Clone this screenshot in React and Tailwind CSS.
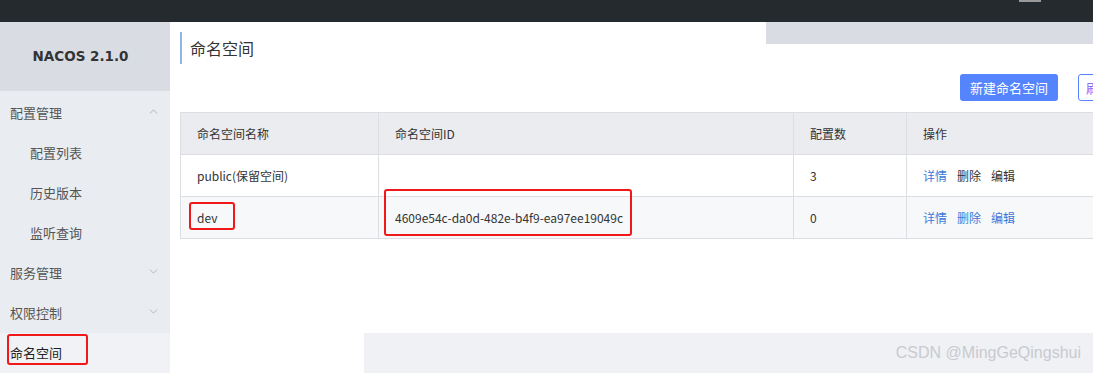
import React from "react";
import { ChevronUp, ChevronDown } from "lucide-react";

const font = { fontFamily: '"Noto Sans CJK SC", "Liberation Sans", sans-serif' };

function RedBox({ className }) {
  return <div className={"absolute border-2 border-[#f01818] rounded-[3px] pointer-events-none " + className} />;
}

function MenuItem({ label, sub, chevron, active, children }) {
  return (
    <div className={"relative h-10 flex items-center justify-between pr-[10px] text-[13px] " + (sub ? "pl-[30px] " : "pl-[10px] ") + (active ? "bg-[#f1f2f6] text-[#222]" : "text-[#555]")}>
      <span>{label}</span>
      {chevron === "up" && <ChevronUp size={13} strokeWidth={1.2} className="text-[#999] -mt-1" />}
      {chevron === "down" && <ChevronDown size={13} strokeWidth={1.2} className="text-[#999] -mt-1" />}
      {children}
    </div>
  );
}

function App() {
  return (
    <div className="w-[1093px] h-[373px] flex flex-col overflow-hidden bg-white" style={font}>

      {/* ===== TOP BAR ===== */}
      <div className="h-[22px] bg-[#252a2f] flex justify-end pr-[52px] shrink-0">
        <div className="w-[22px] h-[2px] bg-[#9a9a9a]" />
      </div>

      <div className="flex flex-1 min-h-0">

        {/* ===== SIDEBAR ===== */}
        <div className="w-[170px] shrink-0 bg-[#e9ecf0] flex flex-col">
          <div className="h-[70px] bg-[#d9dde3] flex items-center justify-center pr-[9px]">
            <span className="text-[13.5px] font-bold text-[#333]" style={{ fontFamily: '"DejaVu Sans", sans-serif' }}>NACOS 2.1.0</span>
          </div>
          <div className="pt-[2px] flex flex-col">
            <MenuItem label="配置管理" chevron="up" />
            <MenuItem label="配置列表" sub />
            <MenuItem label="历史版本" sub />
            <MenuItem label="监听查询" sub />
            <MenuItem label="服务管理" chevron="down" />
            <MenuItem label="权限控制" chevron="down" />
            <MenuItem label="命名空间" active>
              <RedBox className="left-[7px] top-[1px] w-[81px] h-[31px]" />
            </MenuItem>
          </div>
        </div>

        {/* ===== MAIN ===== */}
        <div className="relative flex-1 flex flex-col overflow-hidden">
          <div className="absolute right-0 top-0 w-[327px] h-[22px] bg-[#d9dde3]" />

          {/* Title */}
          <div className="mt-[10px] ml-[10px] h-[32px] border-l-2 border-[#8fb7df] flex items-center pl-[8px]">
            <span className="text-[16px] text-[#333]">命名空间</span>
          </div>

          {/* Actions */}
          <div className="mt-[10px] h-[27px] flex justify-end gap-5 -mr-[65px]">
            <button className="w-[98px] h-[27px] rounded-[3px] bg-[#5584ff] text-white text-[13px]">新建命名空间</button>
            <button className="w-[80px] h-[27px] rounded-[3px] border border-[#5584ff] bg-white text-[#8a6cff] text-[13px] flex items-center pl-[7px]">刷新</button>
          </div>

          {/* Table */}
          <div className="mt-[11px] ml-[10px] w-[1000px] border-l border-t border-[#dcdee3] text-[12px] text-[#333]">
            <div className="flex h-[42px] bg-[#ebecf0] border-b border-[#dcdee3]">
              <div className="w-[198px] border-r border-[#dcdee3] flex items-center pl-4">命名空间名称</div>
              <div className="w-[415px] border-r border-[#dcdee3] flex items-center pl-4">命名空间ID</div>
              <div className="w-[113px] border-r border-[#dcdee3] flex items-center pl-4">配置数</div>
              <div className="flex-1 flex items-center pl-4">操作</div>
            </div>
            <div className="flex h-[42px] bg-white border-b border-[#dcdee3]">
              <div className="w-[198px] border-r border-[#dcdee3] flex items-center pl-4">public(保留空间)</div>
              <div className="w-[415px] border-r border-[#dcdee3] flex items-center pl-4"></div>
              <div className="w-[113px] border-r border-[#dcdee3] flex items-center pl-4">3</div>
              <div className="flex-1 flex items-center pl-4 gap-[10px]">
                <span className="text-[#3b78d8]">详情</span>
                <span className="text-[#333]">删除</span>
                <span className="text-[#333]">编辑</span>
              </div>
            </div>
            <div className="flex h-[42px] bg-[#f7f8fa] border-b border-[#dcdee3]">
              <div className="relative w-[198px] border-r border-[#dcdee3] flex items-center pl-4">
                dev
                <RedBox className="left-[8px] top-[5px] w-[46px] h-[28px]" />
              </div>
              <div className="relative w-[415px] border-r border-[#dcdee3] flex items-center pl-4">
                4609e54c-da0d-482e-b4f9-ea97ee19049c
                <RedBox className="left-[5px] -top-[8px] w-[248px] h-[47px]" />
              </div>
              <div className="w-[113px] border-r border-[#dcdee3] flex items-center pl-4">0</div>
              <div className="flex-1 flex items-center pl-4 gap-[10px] text-[#3b78d8]">
                <span>详情</span>
                <span>删除</span>
                <span>编辑</span>
              </div>
            </div>
          </div>

          {/* Footer */}
          <div className="mt-auto ml-[194px] h-[40px] bg-[#f0f1f5] flex items-center justify-end pr-[12px]">
            <span className="text-[16px] text-[#c8cacf]" style={{ fontFamily: '"Liberation Sans", sans-serif' }}>CSDN @MingGeQingshui</span>
          </div>
        </div>
      </div>
    </div>
  );
}

export default App;
